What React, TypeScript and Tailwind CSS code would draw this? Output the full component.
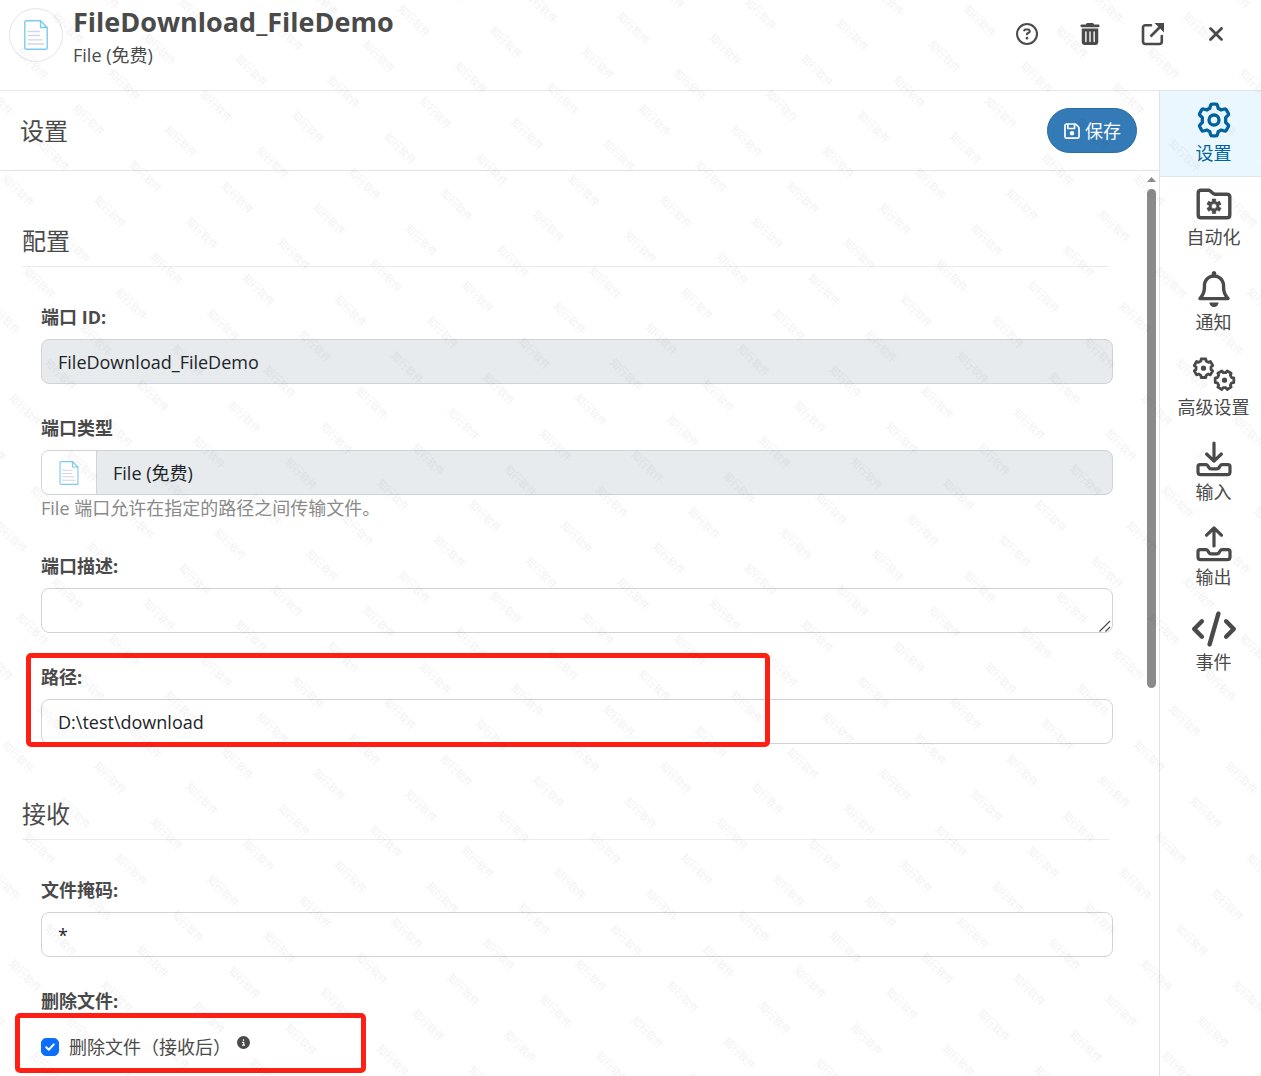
import React, { useState } from "react";
import {
  FaCircleInfo,
  FaCode,
  FaRegBell,
  FaRegCircleQuestion,
  FaRegFloppyDisk,
  FaTrashCan,
  FaXmark,
} from "react-icons/fa6";

//#region icons

type IconProps = { className?: string };

// closed outline of a six-toothed gear around (cx, cy)
const gearPath = (cx: number, cy: number, outer: number, inner: number, turn = 0) => {
  const points: string[] = [];
  for (let i = 0; i < 6; i++) {
    const mid = i * 60 - 90 + turn;
    [
      [inner, -20],
      [outer, -14],
      [outer, 14],
      [inner, 20],
    ].forEach(([r, d]) => {
      const a = ((mid + d) * Math.PI) / 180;
      points.push(`${(cx + r * Math.cos(a)).toFixed(2)} ${(cy + r * Math.sin(a)).toFixed(2)}`);
    });
  }
  return `M${points.join("L")}Z`;
};

const FileIcon = ({ className }: IconProps) => (
  <svg viewBox="0 0 24 30" fill="none" className={className} aria-hidden="true">
    <path d="M2 .8H16.5L23.2 7.5V28a1.2 1.2 0 0 1-1.2 1.2H2A1.2 1.2 0 0 1 .8 28V2A1.2 1.2 0 0 1 2 .8Z" stroke="#7dcbee" strokeWidth="1.4" />
    <path d="M16.5 .8V7.5H23.2" stroke="#7dcbee" strokeWidth="1.4" />
    <path d="M3.5 11.5H16M3.5 15.5H16M3.5 19.8H18.5M3.5 24H20" stroke="#cfd6e4" strokeWidth="1.3" />
  </svg>
);

const GearIcon = ({ className }: IconProps) => (
  <svg viewBox="0 0 36 36" fill="none" stroke="currentColor" strokeLinejoin="round" className={className} aria-hidden="true">
    <path
      d="M14.6 3.2Q14.9 2.2 16 2.2H20Q21.1 2.2 21.4 3.2L22.2 6.4Q23.7 7 25 8L28.5 7Q29.6 6.7 30.2 7.7L32.4 11.5Q32.9 12.4 32.1 13.2L29.6 15.6Q29.9 18 29.6 20.4L32.1 22.8Q32.9 23.6 32.4 24.5L30.2 28.3Q29.6 29.3 28.5 29L25 28Q23.7 29 22.2 29.6L21.4 32.8Q21.1 33.8 20 33.8H16Q14.9 33.8 14.6 32.8L13.8 29.6Q12.3 29 11 28L7.5 29Q6.4 29.3 5.8 28.3L3.6 24.5Q3.1 23.6 3.9 22.8L6.4 20.4Q6.1 18 6.4 15.6L3.9 13.2Q3.1 12.4 3.6 11.5L5.8 7.7Q6.4 6.7 7.5 7L11 8Q12.3 7 13.8 6.4Z"
      strokeWidth="3.3"
    />
    <circle cx="18" cy="18" r="5" strokeWidth="3.3" />
  </svg>
);

const FolderGearIcon = ({ className }: IconProps) => (
  <svg viewBox="0 0 36 32" fill="none" stroke="currentColor" strokeLinejoin="round" className={className} aria-hidden="true">
    <path
      d="M5 2.2H12.2Q13.4 2.2 14.3 3L16.9 5.3Q17.8 6.2 19 6.2H31Q33.8 6.2 33.8 9V27Q33.8 29.8 31 29.8H5Q2.2 29.8 2.2 27V5Q2.2 2.2 5 2.2Z"
      strokeWidth="3.4"
    />
    <path
      d={`${gearPath(18, 18.2, 7.4, 5)}M20.6 18.2A2.6 2.6 0 1 0 15.4 18.2A2.6 2.6 0 1 0 20.6 18.2Z`}
      fill="currentColor"
      fillRule="evenodd"
      strokeWidth="0.6"
    />
  </svg>
);

const GearsIcon = ({ className }: IconProps) => (
  <svg viewBox="0 0 44 36" fill="none" stroke="currentColor" strokeLinejoin="round" className={className} aria-hidden="true">
    <path d={gearPath(11.5, 12.2, 9.6, 7.6)} strokeWidth="2.8" />
    <circle cx="11.5" cy="12.2" r="2.6" fill="currentColor" stroke="none" />
    <path d={gearPath(32.5, 24.2, 9.6, 7.6, 30)} strokeWidth="2.8" />
    <circle cx="32.5" cy="24.2" r="2.6" fill="currentColor" stroke="none" />
  </svg>
);

const TRAY =
  "M4 23.7H10Q11.2 23.7 11.8 24.7L12.8 26.4Q13.6 27.8 15 27.8H21Q22.4 27.8 23.2 26.4L24.2 24.7Q24.8 23.7 26 23.7H32Q34 23.7 34 25.7V31Q34 33.6 31.4 33.6H4.6Q2 33.6 2 31V25.7Q2 23.7 4 23.7Z";

const InputIcon = ({ className }: IconProps) => (
  <svg viewBox="0 0 36 36" fill="none" stroke="currentColor" strokeWidth="3.2" strokeLinecap="round" strokeLinejoin="round" className={className} aria-hidden="true">
    <path d={TRAY} />
    <path d="M18 2V20M10.6 13L18 20.2L25.4 13" />
  </svg>
);

const OutputIcon = ({ className }: IconProps) => (
  <svg viewBox="0 0 36 36" fill="none" stroke="currentColor" strokeWidth="3.2" strokeLinecap="round" strokeLinejoin="round" className={className} aria-hidden="true">
    <path d={TRAY} />
    <path d="M18 20V2.2M10.6 9.2L18 2L25.4 9.2" />
  </svg>
);

const OpenIcon = ({ className }: IconProps) => (
  <svg viewBox="0 0 24 24" fill="none" stroke="currentColor" strokeWidth="2.6" className={className} aria-hidden="true">
    <path d="M10 3.2H4.5Q2 3.2 2 5.7V19.5Q2 22 4.5 22H18.3Q20.8 22 20.8 19.5V14" strokeLinecap="round" />
    <path d="M9.5 14.5L19 5" />
    <path d="M13.5 1H23V10.5Z" fill="currentColor" stroke="none" />
  </svg>
);

//#endregion

const tabs = [
  { title: "设置", Icon: GearIcon, size: "size-9" },
  { title: "自动化", Icon: FolderGearIcon, size: "h-8 w-9" },
  { title: "通知", Icon: FaRegBell, size: "size-9" },
  { title: "高级设置", Icon: GearsIcon, size: "h-9 w-11" },
  { title: "输入", Icon: InputIcon, size: "size-9" },
  { title: "输出", Icon: OutputIcon, size: "size-9" },
  { title: "事件", Icon: FaCode, size: "h-9 w-11" },
];

const inputClass =
  "block h-[45px] w-full rounded-lg border border-[#ced4da] px-4 text-lg text-[#212529] outline-none";

function Section({ title, children }: { title: string; children: React.ReactNode }) {
  return (
    <section className="pt-[52px]">
      <h3 className="mr-[38px] ml-[22px] border-b border-[#ebebeb] pb-[7px] text-2xl leading-9">{title}</h3>
      <div className="mt-[38px] mr-[34px] ml-[41px] flex flex-col gap-8">{children}</div>
    </section>
  );
}

function Label({ htmlFor, children }: { htmlFor: string; children: React.ReactNode }) {
  return (
    <label htmlFor={htmlFor} className="mb-2.5 block text-lg leading-6 font-bold">
      {children}
    </label>
  );
}

function Watermark() {
  return (
    <svg className="pointer-events-none absolute inset-0 size-full" aria-hidden="true">
      <defs>
        <pattern id="mark" width="80" height="50" patternUnits="userSpaceOnUse" patternTransform="rotate(45) translate(28 -2)">
          <text x="40" y="28" textAnchor="middle" fontSize="10" fill="#000" fillOpacity="0.06">
            知行软件
          </text>
        </pattern>
      </defs>
      <rect width="100%" height="100%" fill="url(#mark)" />
    </svg>
  );
}

export default function App() {
  const [active, setActive] = useState("设置");
  const [removeFile, setRemoveFile] = useState(true);

  return (
    <div className="relative flex min-h-screen flex-col overflow-hidden bg-white font-['Open_Sans','Noto_Sans_CJK_SC',sans-serif] text-[#4a4a4a]">
      <header className="flex h-[91px] items-start justify-between border-b border-[#e4e6e8] pr-[33px] pl-[9px]">
        <div className="flex gap-2.5">
          <div className="mt-2 flex size-[54px] items-center justify-center rounded-full border border-[#e2e6e8]">
            <FileIcon className="h-[30px] w-6" />
          </div>
          <div className="pt-1">
            <h1 className="text-[27px] leading-9 font-bold">FileDownload_FileDemo</h1>
            <p className="text-lg leading-[30px]">File (免费)</p>
          </div>
        </div>
        <div className="mt-[22px] flex gap-[39px]">
          <button type="button" title="帮助" className="flex size-6 items-center justify-center">
            <FaRegCircleQuestion className="size-[22px]" />
          </button>
          <button type="button" title="删除" className="flex size-6 items-center justify-center">
            <FaTrashCan className="size-[22px]" />
          </button>
          <button type="button" title="打开" className="flex size-6 items-center justify-center">
            <OpenIcon className="size-6" />
          </button>
          <button type="button" title="关闭" className="flex size-6 items-center justify-center">
            <FaXmark className="size-[22px]" />
          </button>
        </div>
      </header>

      <div className="flex grow">
        <main className="flex min-w-0 grow flex-col">
          <div className="flex h-20 items-center justify-between border-b border-[#e0e4e7] pr-[22px] pl-5">
            <h2 className="text-2xl leading-9">设置</h2>
            <button
              type="button"
              className="flex h-[45px] items-center gap-1 rounded-full border border-[#2a6ca6] bg-[#337ab7] px-[15px] text-lg text-white"
            >
              <FaRegFloppyDisk className="size-[18px]" />
              保存
            </button>
          </div>

          <div className="flex grow">
            <form className="min-w-0 grow pb-4">
              <Section title="配置">
                <div>
                  <Label htmlFor="port_id">端口 ID:</Label>
                  <input id="port_id" readOnly value="FileDownload_FileDemo" className={`${inputClass} bg-[#e7ebee]`} />
                </div>
                <div>
                  <Label htmlFor="port_type">端口类型</Label>
                  <div className="flex h-[45px] overflow-hidden rounded-lg border border-[#ced4da] bg-[#e7ebee]">
                    <span className="flex w-[55px] shrink-0 items-center justify-center border-r border-[#ced4da] bg-white">
                      <FileIcon className="h-6 w-5" />
                    </span>
                    <input
                      id="port_type"
                      readOnly
                      value="File (免费)"
                      className="min-w-0 grow px-4 text-lg text-[#212529] outline-none"
                    />
                  </div>
                  <p className="mt-px pb-0.5 text-lg leading-6 text-[#8a8a8a]">File 端口允许在指定的路径之间传输文件。</p>
                </div>
                <div className="relative">
                  <Label htmlFor="port_desc">端口描述:</Label>
                  <textarea
                    id="port_desc"
                    rows={1}
                    className={`${inputClass} resize-y py-2 [&::-webkit-resizer]:hidden`}
                  />
                  <svg
                    viewBox="0 0 12 12"
                    className="pointer-events-none absolute right-0.5 bottom-px size-3"
                    aria-hidden="true"
                  >
                    <path d="M.5 11.5L11 1M6.5 11.5L11 7" fill="none" stroke="#4a4a4a" strokeWidth="1.2" />
                  </svg>
                </div>
                <div className="relative">
                  <Label htmlFor="path">路径:</Label>
                  <input id="path" defaultValue="D:\test\download" className={inputClass} />
                  <span className="pointer-events-none absolute -top-3 -bottom-[3px] -left-[15px] w-[744px] rounded-[5px] border-5 border-[#ff2015]" />
                </div>
              </Section>

              <Section title="接收">
                <div>
                  <Label htmlFor="mask">文件掩码:</Label>
                  <input id="mask" defaultValue="*" className={inputClass} />
                </div>
                <fieldset>
                  <legend className="mb-[22px] text-lg leading-6 font-bold">删除文件:</legend>
                  <div className="relative flex items-center">
                    <input
                      id="remove"
                      type="checkbox"
                      checked={removeFile}
                      onChange={(e) => setRemoveFile(e.target.checked)}
                      className="peer size-[18px] appearance-none rounded-[5px] border border-[#ced4da] checked:border-[#0d6efd] checked:bg-[#0d6efd]"
                    />
                    <svg
                      viewBox="0 0 18 18"
                      className="pointer-events-none absolute left-0 size-[18px] opacity-0 peer-checked:opacity-100"
                      aria-hidden="true"
                    >
                      <path d="M5.2 9.2L7.8 11.8L12.8 6.4" fill="none" stroke="#fff" strokeWidth="2" strokeLinecap="round" strokeLinejoin="round" />
                    </svg>
                    <label htmlFor="remove" className="ml-2.5 text-lg leading-6">
                      删除文件（接收后）
                    </label>
                    <FaCircleInfo className="mb-2.5 ml-1.5 size-[13px]" />
                    <span className="pointer-events-none absolute -top-[22px] -bottom-[14px] -left-[26px] w-[351px] rounded-[5px] border-5 border-[#ff2015]" />
                  </div>
                </fieldset>
              </Section>
            </form>

            {/* scroll track */}
            <div className="flex w-3 shrink-0 flex-col items-start gap-[7px] pt-1.5">
              <svg viewBox="0 0 9 5" className="h-[5px] w-[9px]" aria-hidden="true">
                <path d="M4.5 0L9 5H0Z" fill="#8b8b8b" />
              </svg>
              <div className="h-[499px] w-[9px] rounded-full bg-[#8b8b8b]" />
            </div>
          </div>
        </main>

        <nav className="flex w-[102px] shrink-0 flex-col border-l border-[#dfe3e6]">
          {tabs.map(({ title, Icon, size }) => (
            <button
              key={title}
              type="button"
              onClick={() => setActive(title)}
              className={`flex flex-col items-center border-b pl-1.5 text-lg ${
                active === title
                  ? "h-[86px] border-[#dfe6ea] bg-[#ebf7fe] pt-[11px] text-[#00639f]"
                  : "h-[85px] border-transparent pt-[9px]"
              }`}
            >
              <span className="flex h-9 items-center justify-center">
                <Icon className={size} />
              </span>
              <span className="mt-px leading-7">{title}</span>
            </button>
          ))}
        </nav>
      </div>

      <Watermark />
    </div>
  );
}
